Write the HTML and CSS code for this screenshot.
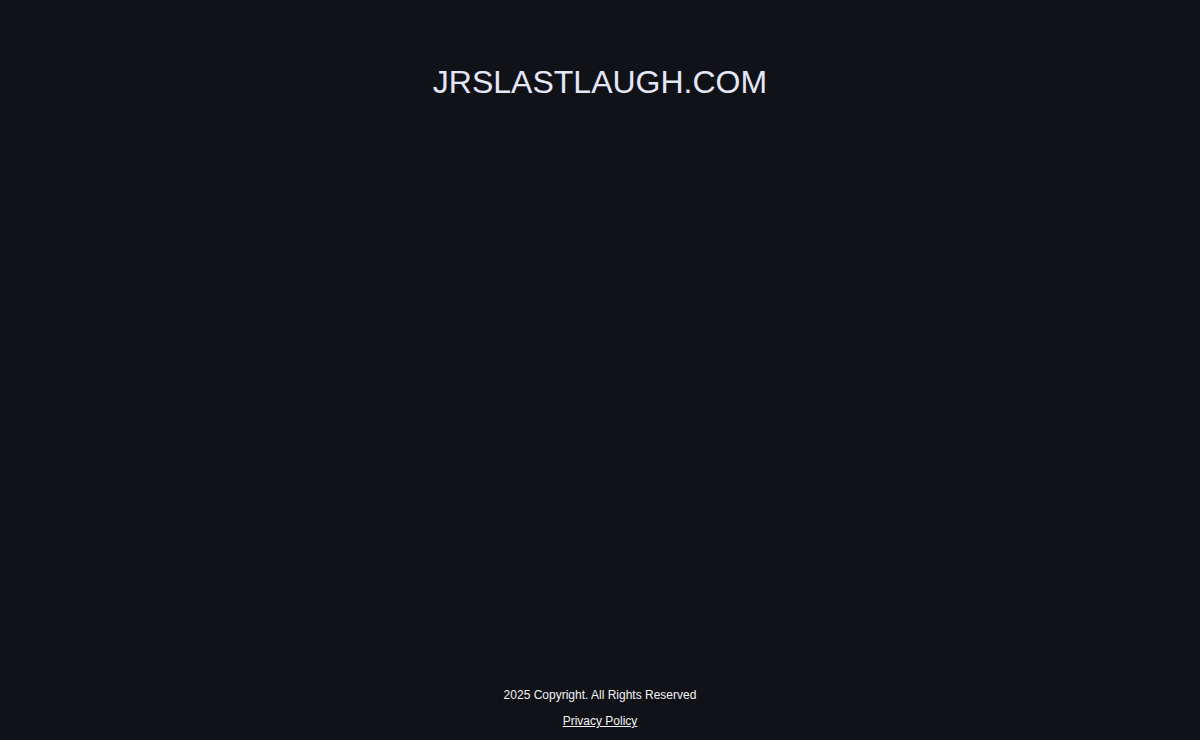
FILE: index.html
```html
<!DOCTYPE html>
<html lang="en">
<head>
<meta charset="utf-8">
<title>JRSLASTLAUGH.COM</title>
<link rel="stylesheet" href="styles.css">
</head>
<body>
<div class="page">
  <header class="header">
    <h1 class="title">JRSLASTLAUGH.COM</h1>
  </header>
  <main class="main"></main>
  <footer class="footer">
    <p class="copy">2025 Copyright. All Rights Reserved</p>
    <a class="privacy" href="#">Privacy Policy</a>
  </footer>
</div>
</body>
</html>
```
FILE: styles.css
```css
html, body {
  margin: 0;
  padding: 0;
  background: #111218;
  height: 100%;
}
.page {
  min-height: 100vh;
  display: flex;
  flex-direction: column;
  font-family: "Liberation Sans", Arial, sans-serif;
}
.header {
  padding-top: 64px;
  text-align: center;
}
.title {
  margin: 0;
  font-size: 32px;
  font-weight: 400;
  line-height: 37px;
  color: #e4e7f7;
}
.main {
  flex: 1;
}
.footer {
  display: flex;
  flex-direction: column;
  align-items: center;
  gap: 12px;
  padding-bottom: 12px;
}
.copy {
  margin: 0;
  font-size: 12px;
  line-height: 14px;
  color: #f2f2f5;
}
.privacy {
  font-size: 12px;
  line-height: 14px;
  color: #f2f2f5;
  text-decoration: underline;
}
```
